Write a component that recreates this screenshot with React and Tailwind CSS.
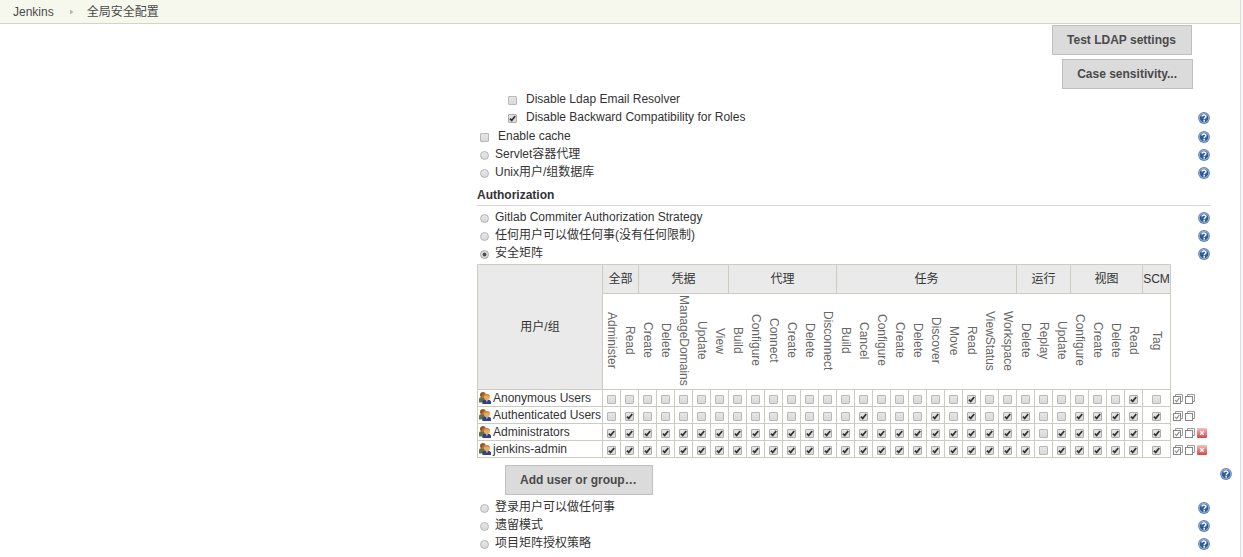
import React from "react";

const GROUPS = [
  { name: "全部", items: ["Administer", "Read"] },
  { name: "凭据", items: ["Create", "Delete", "ManageDomains", "Update", "View"] },
  { name: "代理", items: ["Build", "Configure", "Connect", "Create", "Delete", "Disconnect"] },
  {
    name: "任务",
    items: ["Build", "Cancel", "Configure", "Create", "Delete", "Discover", "Move", "Read", "ViewStatus", "Workspace"],
  },
  { name: "运行", items: ["Delete", "Replay", "Update"] },
  { name: "视图", items: ["Configure", "Create", "Delete", "Read"] },
  { name: "SCM", items: ["Tag"] },
];

const PERMISSIONS = GROUPS.flatMap((g) => g.items.map((item) => ({ group: g.name, item })));
const ALL_BUT_REPLAY = PERMISSIONS.map((_, i) => i).filter((i) => i !== 24);

const USERS = [
  { name: "Anonymous Users", granted: [20, 29], removable: false },
  { name: "Authenticated Users", granted: [1, 14, 18, 20, 22, 23, 26, 27, 28, 29, 30], removable: false },
  { name: "Administrators", granted: ALL_BUT_REPLAY, removable: true },
  { name: "jenkins-admin", granted: ALL_BUT_REPLAY, removable: true },
];

function Check(props) {
  return (
    <span className="inline-grid size-[9px] shrink-0">
      <input
        type="checkbox"
        className="peer col-start-1 row-start-1 size-[9px] appearance-none rounded-[1px] border border-[#b8b8b8] bg-linear-to-b from-[#e6e6e6] to-[#dadada] checked:border-[#acacac]"
        {...props}
      />
      <svg
        viewBox="0 0 9 9"
        className="pointer-events-none invisible col-start-1 row-start-1 size-[9px] peer-checked:visible"
        aria-hidden="true"
      >
        <path d="M1.9 4.7 L3.7 6.4 L7.2 2" fill="none" stroke="#333333" strokeWidth="1.7" />
      </svg>
    </span>
  );
}

function Radio(props) {
  return (
    <span className="inline-grid size-[9px] shrink-0">
      <input
        type="radio"
        className="peer col-start-1 row-start-1 size-[9px] appearance-none rounded-full border border-[#b4b4b4] bg-linear-to-b from-[#e8e8e8] to-[#d8d8d8] checked:border-[#a4a4a4]"
        {...props}
      />
      <svg
        viewBox="0 0 9 9"
        className="pointer-events-none invisible col-start-1 row-start-1 size-[9px] peer-checked:visible"
        aria-hidden="true"
      >
        <circle cx="4.5" cy="4.5" r="1.9" fill="#4c4c4c" />
      </svg>
    </span>
  );
}

function Help({ topic }) {
  return (
    <button type="button" aria-label={"Help: " + topic} className="size-3 shrink-0">
      <svg viewBox="0 0 12 12" className="block size-3" aria-hidden="true">
        <circle cx="6" cy="6" r="5.9" fill="#5f82b3" />
        <circle cx="6" cy="6" r="4.9" fill="#a9c0de" />
        <circle cx="6" cy="6" r="4.3" fill="#2f5c9e" />
        <path
          d="M4.1 4.6 C4.1 2.5 7.9 2.5 7.9 4.5 C7.9 5.8 6.2 5.8 6.2 7.3"
          fill="none"
          stroke="#ffffff"
          strokeWidth="1.5"
        />
        <rect x="5.4" y="8" width="1.6" height="1.5" fill="#ffffff" />
      </svg>
    </button>
  );
}

function OptionRow({ control, label, help = true, className = "" }) {
  return (
    <div className={"flex h-[18px] items-center justify-between " + className}>
      <label className="flex items-center">
        <span className="flex pt-[2px]">{control}</span>
        {label}
      </label>
      {help && (
        <span className="flex pt-[2px]">
          <Help topic={label.props.children} />
        </span>
      )}
    </div>
  );
}

function RadioRow({ label, ...props }) {
  return (
    <OptionRow
      className="pl-[3px]"
      control={<Radio {...props} />}
      label={<span className="pl-[6px]">{label}</span>}
    />
  );
}

function GrayButton({ children, className = "" }) {
  return (
    <button
      type="button"
      className={
        "h-[30px] border border-[#bfbfbf] bg-[#dbdbdb] pr-[15px] pl-[14px] font-bold text-[#4a4a4a] " + className
      }
    >
      {children}
    </button>
  );
}

function UsersIcon() {
  return (
    <svg viewBox="0 0 12 12" className="size-3 shrink-0" aria-hidden="true">
      <path d="M0 10.5 V7.4 C0 5.8 1.2 5 3.5 5 C5.5 5 6.5 6 6.5 8 V10.5 Z" fill="#5c7445" />
      <circle cx="4" cy="3" r="2.9" fill="#b4703a" />
      <path d="M1.1 3.6 C0.8 0.6 4 -0.4 6 1.2 L3.4 2.4 L2.8 5 Z" fill="#8a5228" />
      <path d="M3.4 12 V9.8 C3.4 8.1 5 7.4 7.7 7.4 C10.6 7.4 12 8.2 12 10 V12 Z" fill="#333f86" />
      <path d="M6.7 7.4 L7.9 10.5 L9.1 7.4 Z" fill="#b9bedb" />
      <circle cx="7.9" cy="4.9" r="3" fill="#eba85f" />
      <path d="M4.9 4.6 C4.9 1.1 10.9 1.1 10.9 4.6 C9.6 3.1 6.5 3 4.9 4.6 Z" fill="#cf7f35" />
    </svg>
  );
}

function StackIcon({ checked }) {
  return (
    <svg viewBox="0 0 10 10" className="block size-[10px]" aria-hidden="true">
      <path d="M2.5 2.5 V0.5 H9.5 V7.5 H7.5" fill="none" stroke="#9a9a9a" strokeWidth="1" />
      <rect x="0.5" y="2.5" width="7" height="7" fill="#ffffff" stroke="#868686" strokeWidth="1" />
      {checked && <path d="M2 5.8 L3.6 7.6 L6.4 3.8" fill="none" stroke="#8a8a8a" strokeWidth="1.1" />}
    </svg>
  );
}

function RemoveIcon() {
  return (
    <svg viewBox="0 0 10 10" className="block size-[10px]" aria-hidden="true">
      <defs>
        <linearGradient id="remove-fill" x1="0" y1="0" x2="0" y2="1">
          <stop offset="0" stopColor="#f4c2c2" />
          <stop offset="0.5" stopColor="#e77f80" />
          <stop offset="1" stopColor="#d9444a" />
        </linearGradient>
      </defs>
      <rect width="10" height="10" rx="1" fill="url(#remove-fill)" />
      <path d="M3.3 3.3 L6.7 6.7 M6.7 3.3 L3.3 6.7" stroke="#ffffff" strokeWidth="1.3" />
    </svg>
  );
}

function PermissionMatrix() {
  return (
    <table className="w-max table-fixed border-separate border-spacing-0">
      <thead>
        <tr className="h-[30px]">
          <th
            rowSpan={2}
            scope="col"
            className="w-[126px] border border-[#ccccc0] bg-[#eaeaea] p-0 font-normal"
          >
            用户/组
          </th>
          {GROUPS.map((g) => (
            <th
              key={g.name}
              scope="colgroup"
              colSpan={g.items.length}
              className="border-y border-r border-[#ccccc0] bg-[#eaeaea] p-0 font-normal"
            >
              {g.name}
            </th>
          ))}
          <td rowSpan={2} className="p-0" />
        </tr>
        <tr className="h-24">
          {PERMISSIONS.map((p, i) => {
            const last = i === PERMISSIONS.length - 1;
            return (
              <th
                key={i}
                scope="col"
                className={
                  "border-b border-[#ccccc0] p-0 font-normal text-[#666666] " + (last ? "w-7 border-r" : "w-[18px]")
                }
              >
                <span className="flex justify-center pb-[2px]">
                  <span className="leading-4 whitespace-nowrap [writing-mode:vertical-rl]">{p.item}</span>
                </span>
              </th>
            );
          })}
        </tr>
      </thead>
      <tbody>
        {USERS.map((u) => (
          <tr key={u.name} className="h-[17px]">
            <th scope="row" className="border-x border-b border-[#ccccc0] p-0 text-left font-normal">
              <span className="flex h-4 items-center gap-[2px] pl-px leading-4 whitespace-nowrap">
                <UsersIcon />
                {u.name}
              </span>
            </th>
            {PERMISSIONS.map((p, i) => (
              <td key={i} className="border-r border-b border-[#ccccc0] p-0">
                <span className="flex h-4 items-center justify-center pt-[2px]">
                  <Check
                    defaultChecked={u.granted.includes(i)}
                    aria-label={u.name + ": " + p.group + "/" + p.item}
                  />
                </span>
              </td>
            ))}
            <td className="p-0">
              <span className="flex h-4 items-center gap-[2px] pt-px pl-[2px]">
                <button type="button" aria-label={"Select all for " + u.name}>
                  <StackIcon checked />
                </button>
                <button type="button" aria-label={"Unselect all for " + u.name}>
                  <StackIcon />
                </button>
                {u.removable && (
                  <button type="button" aria-label={"Remove " + u.name}>
                    <RemoveIcon />
                  </button>
                )}
              </span>
            </td>
          </tr>
        ))}
      </tbody>
    </table>
  );
}

export default function App() {
  return (
    <div className="flex min-h-screen bg-[#f7f7f9] font-['Liberation_Sans','Noto_Sans_CJK_SC',sans-serif] text-xs leading-[18px] text-[#333333]">
      <div className="mr-[2px] min-w-0 grow border-r border-[#dddddd] bg-white">
        <nav
          aria-label="Breadcrumb"
          className="flex h-6 items-center border-b border-[#d3d3c6] bg-[#f6f8ee] pl-[13px] text-[#4a4a4a]"
        >
          <a href="#jenkins">Jenkins</a>
          <svg viewBox="0 0 4 6" className="mr-[13px] ml-4 h-[6px] w-1" aria-hidden="true">
            <path d="M0 0.5 L3.6 3 L0 5.5 Z" fill="#b5b8ae" />
          </svg>
          <a href="#security">全局安全配置</a>
        </nav>

        <main className="mr-[30px] ml-[477px]">
          <div className="flex flex-col items-end gap-1 pt-px pr-[17px] pb-px">
            <GrayButton className="mr-px">Test LDAP settings</GrayButton>
            <GrayButton>Case sensitivity...</GrayButton>
          </div>

          <OptionRow
            className="pl-[31px]"
            control={<Check />}
            label={<span className="pl-[9px]">Disable Ldap Email Resolver</span>}
            help={false}
          />
          <OptionRow
            className="pl-[31px]"
            control={<Check defaultChecked />}
            label={<span className="pl-[9px]">Disable Backward Compatibility for Roles</span>}
          />
          <div className="pt-px">
            <OptionRow
              className="pl-[3px]"
              control={<Check />}
              label={<span className="pl-[9px]">Enable cache</span>}
            />
            <RadioRow name="realm" label="Servlet容器代理" />
            <RadioRow name="realm" label="Unix用户/组数据库" />
          </div>

          <h2 className="mt-[5px] mb-[2px] border-b border-[#d6d6d6] pb-px font-bold">Authorization</h2>

          <RadioRow name="authorization" label="Gitlab Commiter Authorization Strategy" />
          <RadioRow name="authorization" label="任何用户可以做任何事(没有任何限制)" />
          <RadioRow name="authorization" label="安全矩阵" defaultChecked />

          <div className="pt-[2px]">
            <PermissionMatrix />
          </div>

          <div className="-mr-[22px] flex items-start justify-between pt-[7px] pb-[3px] pl-7">
            <GrayButton>Add user or group…</GrayButton>
            <span className="flex pt-[3px]">
              <Help topic="Add user or group" />
            </span>
          </div>

          <RadioRow name="authorization" label="登录用户可以做任何事" />
          <RadioRow name="authorization" label="遗留模式" />
          <RadioRow name="authorization" label="项目矩阵授权策略" />
        </main>
      </div>
    </div>
  );
}
